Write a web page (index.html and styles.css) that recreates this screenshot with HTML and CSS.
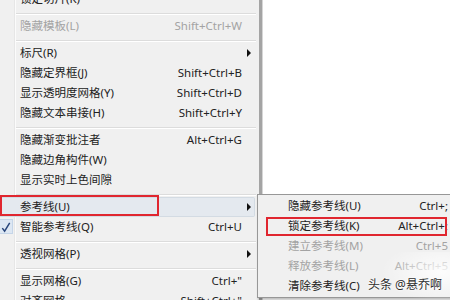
FILE: index.html
```html
<!DOCTYPE html>
<html lang="zh-CN">
<head>
<meta charset="utf-8">
<link rel="stylesheet" href="styles.css">
</head>
<body>
<div class="screen">
  <div class="menu">
    <div class="item"><span class="label">锁定切片(K)</span><span class="key"></span><span class="sub"></span></div>
    <div class="sep"></div>
    <div class="item disabled"><span class="label">隐藏模板(L)</span><span class="key">Shift+Ctrl+W</span><span class="sub"></span></div>
    <div class="sep"></div>
    <div class="item"><span class="label">标尺(R)</span><span class="key"></span><span class="sub"><i class="arrow"></i></span></div>
    <div class="item"><span class="label">隐藏定界框(J)</span><span class="key">Shift+Ctrl+B</span><span class="sub"></span></div>
    <div class="item"><span class="label">显示透明度网格(Y)</span><span class="key">Shift+Ctrl+D</span><span class="sub"></span></div>
    <div class="item"><span class="label">隐藏文本串接(H)</span><span class="key">Shift+Ctrl+Y</span><span class="sub"></span></div>
    <div class="sep"></div>
    <div class="item"><span class="label">隐藏渐变批注者</span><span class="key">Alt+Ctrl+G</span><span class="sub"></span></div>
    <div class="item"><span class="label">隐藏边角构件(W)</span><span class="key"></span><span class="sub"></span></div>
    <div class="item"><span class="label">显示实时上色间隙</span><span class="key"></span><span class="sub"></span></div>
    <div class="sep"></div>
    <div class="item active"><span class="redbox main-box"></span><span class="label">参考线(U)</span><span class="key"></span><span class="sub"><i class="arrow"></i></span></div>
    <div class="item"><span class="check"><svg width="13" height="14" viewBox="0 0 13 14"><path d="M2.5 8.2 L5 11.5 L10.5 2.5" fill="none" stroke="#27457a" stroke-width="1.6"/></svg></span><span class="label">智能参考线(Q)</span><span class="key">Ctrl+U</span><span class="sub"></span></div>
    <div class="sep"></div>
    <div class="item"><span class="label">透视网格(P)</span><span class="key"></span><span class="sub"><i class="arrow"></i></span></div>
    <div class="sep"></div>
    <div class="item"><span class="label">显示网格(G)</span><span class="key">Ctrl+"</span><span class="sub"></span></div>
    <div class="item"><span class="label">对齐网格</span><span class="key">Shift+Ctrl+"</span><span class="sub"></span></div>
  </div>

  <div class="submenu">
    <div class="sitem"><span class="label">隐藏参考线(U)</span><span class="key">Ctrl+;</span></div>
    <div class="sitem"><span class="redbox sub-box"></span><span class="label">锁定参考线(K)</span><span class="key">Alt+Ctrl+;</span></div>
    <div class="sitem disabled"><span class="label">建立参考线(M)</span><span class="key">Ctrl+5</span></div>
    <div class="sitem disabled"><span class="label">释放参考线(L)</span><span class="key">Alt+Ctrl+5</span></div>
    <div class="sitem"><span class="label">清除参考线(C)</span><span class="key"></span></div>
  </div>

  <div class="watermark"><span class="wm-text">头条 @悬乔啊</span></div>
</div>
</body>
</html>
```

FILE: styles.css
```css
html, body {
  margin: 0;
  padding: 0;
  background: #ffffff;
}

.screen {
  position: relative;
  width: 450px;
  height: 300px;
  overflow: hidden;
  background: #ffffff;
  font-family: "Noto Sans", "Noto Sans CJK SC", sans-serif;
  font-size: 11.5px;
  color: #222222;
}

.menu {
  width: 259px;
  margin-top: -11px;
  background:
    linear-gradient(to right, #f0f0f0 14px, #e6e6e6 14px 15px, #fbfbfb 15px 16px, #f0f0f0 16px);
  border-right: 3px solid #a4a4a4;
  box-shadow: 1px 0 0 #d6d6d6;
}

.item {
  position: relative;
  display: flex;
  align-items: center;
  height: 20px;
  line-height: 20px;
  padding-left: 20px;
  white-space: nowrap;
}

.item .label {
  position: relative;
  flex: 1;
}

.item .key {
  position: relative;
  text-align: right;
}

.item .sub {
  position: relative;
  width: 17px;
  height: 20px;
  display: flex;
  align-items: center;
}

.arrow {
  display: block;
  margin-left: 5px;
  width: 0;
  height: 0;
  border-left: 4px solid #111;
  border-top: 4px solid transparent;
  border-bottom: 4px solid transparent;
}

.disabled {
  color: #a3a3a3;
}

.sep {
  margin: 4px 3px 1px 16px;
  height: 1px;
  background: #dcdcdc;
  border-bottom: 1px solid #ffffff;
}

.item.active::before {
  content: "";
  position: absolute;
  left: 0;
  right: 4px;
  top: 0;
  bottom: 0;
  background: #e4e9ef;
  border: 1px solid #d3dbe3;
  border-left: none;
  border-radius: 0 2px 2px 0;
}

.redbox {
  position: absolute;
  box-sizing: border-box;
  border: 2px solid #e0262f;
  z-index: 2;
}

.main-box {
  left: 0;
  top: -2px;
  width: 159px;
  height: 21px;
}

.check {
  position: absolute;
  left: 0;
  top: 2px;
  width: 13px;
  height: 15px;
  background: #dde7f3;
  border: 1px solid #c5d5e8;
  border-left: none;
  box-sizing: border-box;
  display: flex;
  align-items: center;
  justify-content: center;
}

.submenu {
  position: absolute;
  left: 257px;
  top: 194px;
  width: 211px;
  padding: 1px 0 1px;
  background: #f0f0f0;
  border: 1px solid #979797;
  box-shadow: 1px 2px 2px rgba(0, 0, 0, 0.25);
}

.sitem {
  position: relative;
  display: flex;
  align-items: center;
  height: 20px;
  line-height: 20px;
  padding-left: 30px;
  padding-right: 21px;
  white-space: nowrap;
}

.sitem .label {
  flex: 1;
}

.sitem .key {
  text-align: right;
}

.sub-box {
  left: 8px;
  top: 1px;
  width: 181px;
  height: 19px;
}

.watermark {
  position: absolute;
  left: 356px;
  top: 252px;
  width: 100px;
  height: 46px;
  display: flex;
  align-items: flex-end;
  padding-left: 12px;
  box-sizing: border-box;
  background: radial-gradient(ellipse 60px 30px at 85px 20px, rgba(255, 255, 255, 0.85), rgba(255, 255, 255, 0) 100%);
}

.wm-text {
  font-size: 12px;
  line-height: 20px;
  margin-bottom: 3px;
  color: #2e2e2e;
  text-shadow: 0 0 2px #ffffff, 0 0 3px #ffffff;
}
```
